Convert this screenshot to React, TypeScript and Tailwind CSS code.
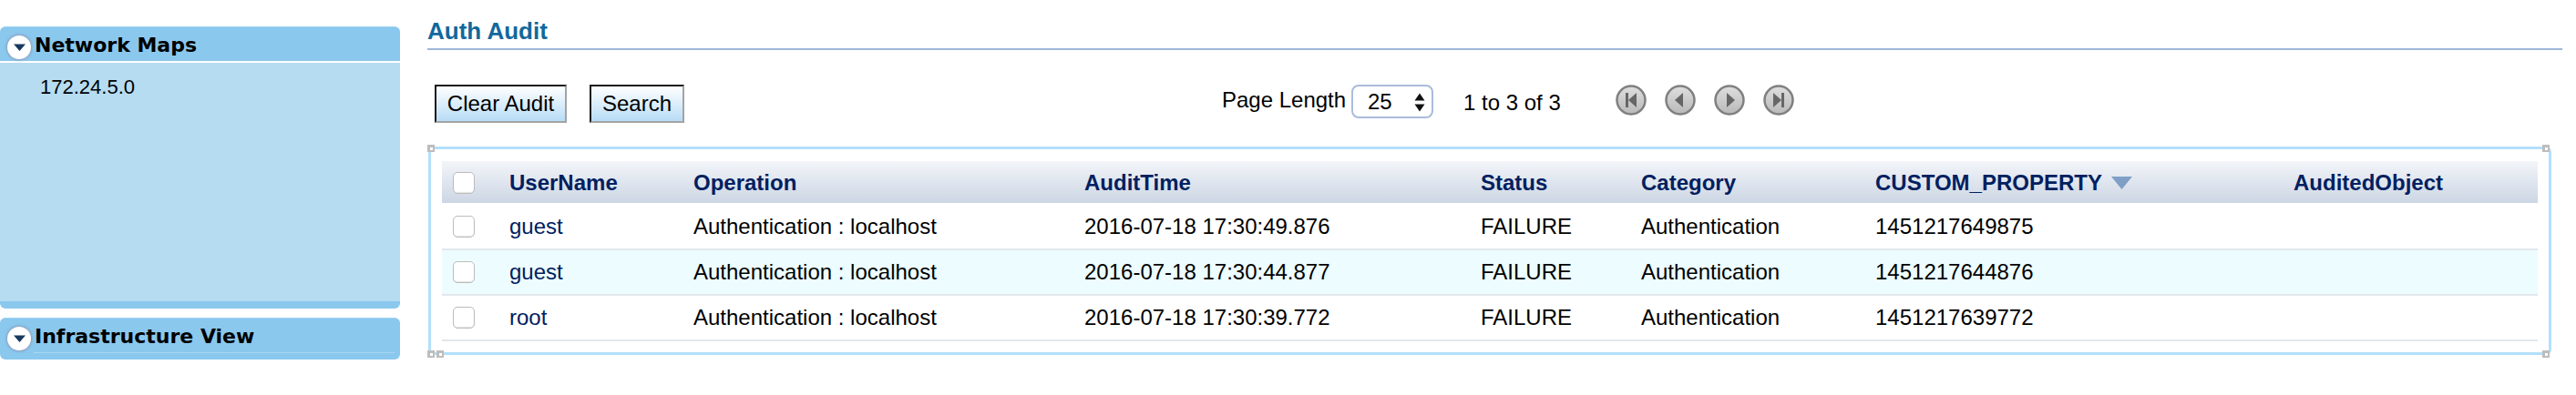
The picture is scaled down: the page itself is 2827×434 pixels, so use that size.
const rows = [
  { user: "guest", time: "2016-07-18 17:30:49.876", prop: "1451217649875" },
  { user: "guest", time: "2016-07-18 17:30:44.877", prop: "1451217644876" },
  { user: "root", time: "2016-07-18 17:30:39.772", prop: "1451217639772" },
];

const gridCols = "grid grid-cols-[74px_202px_429px_435px_176px_257px_459px_268px] items-center";

function ToggleIcon() {
  return (
    <span className="mt-[5px] flex h-[26px] w-[26px] shrink-0 items-center justify-center rounded-full bg-white shadow-[0_0_3px_1px_#8c9dbb]">
      <svg width="13" height="8" viewBox="0 0 13 8">
        <path d="M0 .5h13L6.500 8z" fill="#16395f" />
      </svg>
    </span>
  );
}

function NavButton({ d }: { d: string }) {
  return (
    <svg width="34" height="34" viewBox="0 0 34 34">
      <defs>
        <linearGradient id="navFill" x1="0" y1="0" x2="0" y2="1">
          <stop offset="0" stopColor="#dedede" />
          <stop offset="1" stopColor="#b9b9b9" />
        </linearGradient>
      </defs>
      <circle cx="17" cy="17" r="15.5" fill="url(#navFill)" stroke="#808080" strokeWidth="2.5" />
      <path d={d} fill="#666666" />
    </svg>
  );
}

function Checkbox() {
  return <span className="ml-[12px] block h-[24px] w-[24px] rounded-[5px] border-[1.5px] border-[#bcbcbc] bg-white shadow-[inset_0_-1px_1px_#e4e4e4]" />;
}

function Handle({ className }: { className: string }) {
  return (
    <span className={`absolute flex h-[8px] w-[8px] items-center justify-center bg-[#bdbdbd] ${className}`}>
      <span className="h-[3px] w-[3px] bg-white" />
    </span>
  );
}

export default function App() {
  return (
    <div className="flex h-[434px] w-[2827px] bg-white font-['Liberation_Sans',Arial,sans-serif] text-[24px] text-black">
      {/* Left: accordion */}
      <div className="mt-[29px] w-[439px] shrink-0">
        <div className="flex h-[38px] items-center gap-[4px] rounded-t-[6px] border-t border-[#9dd3f2] bg-[#8ac8ee] pl-[8px] pt-[1px] font-['DejaVu_Sans',sans-serif] text-[22px] font-bold">
          <ToggleIcon />
          <span>Network Maps</span>
        </div>
        <div className="mt-[2px] h-[262px] bg-[#b6dcf2] pl-[44px] pt-[14px] text-[22px] leading-[25px]">172.24.5.0</div>
        <div className="h-[8px] rounded-b-[6px] bg-[#8ac8ee]" />
        <div className="mt-[10px] h-[46px] rounded-[6px] border-t border-[#9dd3f2] bg-[#8ac8ee] pl-[8px]">
          <div className="flex h-[37px] items-center gap-[4px] pt-[1px] font-['DejaVu_Sans',sans-serif] text-[22px] font-bold">
            <ToggleIcon />
            <span>Infrastructure View</span>
          </div>
          <div className="ml-[29px] mr-[6px] h-px bg-[#a9d8f4]" />
        </div>
      </div>

      {/* Right: audit panel */}
      <div className="ml-[30px] w-[2343px] shrink-0">
        <div className="mt-[21px] h-[34px] border-b-2 border-[#9fb6d6] text-[26px] font-bold leading-[27px] text-[#12689c]">Auth Audit</div>

        <div className="mt-[38px] flex h-[42px] items-start pl-[8px]">
          <button className="h-[42px] w-[145px] border-2 border-b-[#a3a3a3] border-l-[#1a1a1a] border-r-[#a3a3a3] border-t-[#1a1a1a] bg-gradient-to-b from-white to-[#b7dcf6]">Clear Audit</button>
          <button className="ml-[25px] h-[42px] w-[104px] border-2 border-b-[#a3a3a3] border-l-[#1a1a1a] border-r-[#a3a3a3] border-t-[#1a1a1a] bg-gradient-to-b from-white to-[#b7dcf6]">Search</button>
          <span className="ml-[590px] h-[36px] w-[142px] leading-[34px]">Page Length</span>
          <div className="flex h-[37px] w-[90px] items-center justify-between rounded-[8px] border-2 border-[#a9bcdc] bg-white pl-[16px] pr-[7px]">
            <span>25</span>
            <svg width="12" height="30" viewBox="0 0 12 30">
              <path d="M6 5.500l5.500 8H.5zM.5 17.500h11l-5.500 8z" fill="#111111" />
            </svg>
          </div>
          <span className="ml-[33px] mt-[3px] w-[107px] leading-[34px]">1 to 3 of 3</span>
          <div className="ml-[60px] flex gap-[20px]">
            <NavButton d="M11 9h3v16h-3zM14 17l9-8v16z" />
            <NavButton d="M11 17l9-8v16z" />
            <NavButton d="M23 17l-9-8v16z" />
            <NavButton d="M23 9h-3v16h3zM20 17l-9-8v16z" />
          </div>
        </div>

        <div className="relative ml-[1px] mt-[26px] h-[229px] w-[2330px] rounded-[6px] border-[3px] border-[#b3e0fb] pl-[12px] pt-[13px]">
          <Handle className="left-[-4px] top-[-5px]" />
          <Handle className="bottom-[-6px] left-[-4px]" />
          <Handle className="bottom-[-6px] left-[6px]" />
          <Handle className="right-[-1px] top-[-5px]" />
          <Handle className="bottom-[-6px] right-[-1px]" />

          <div className={`${gridCols} mb-[2px] h-[46px] w-[2300px] bg-gradient-to-b from-[#f3f5f9] to-[#ccd6e4] pt-[2px] font-bold text-[#00205f]`}>
            <Checkbox />
            <span>UserName</span>
            <span>Operation</span>
            <span>AuditTime</span>
            <span>Status</span>
            <span>Category</span>
            <span className="flex items-center gap-[10px]">
              CUSTOM_PROPERTY
              <svg width="23" height="14" viewBox="0 0 23 14">
                <path d="M0 0h23L11.500 14z" fill="#7f9fc6" />
              </svg>
            </span>
            <span>AuditedObject</span>
          </div>

          {rows.map((row, i) => (
            <div key={row.prop} className={`${gridCols} h-[50px] w-[2300px] border-b-2 border-[#e2e8ec] ${i === 1 ? "bg-[#edfcfe]" : "bg-white"}`}>
              <Checkbox />
              <span className="text-[#00205f]">{row.user}</span>
              <span>Authentication : localhost</span>
              <span>{row.time}</span>
              <span>FAILURE</span>
              <span>Authentication</span>
              <span>{row.prop}</span>
              <span />
            </div>
          ))}
        </div>
      </div>
    </div>
  );
}
